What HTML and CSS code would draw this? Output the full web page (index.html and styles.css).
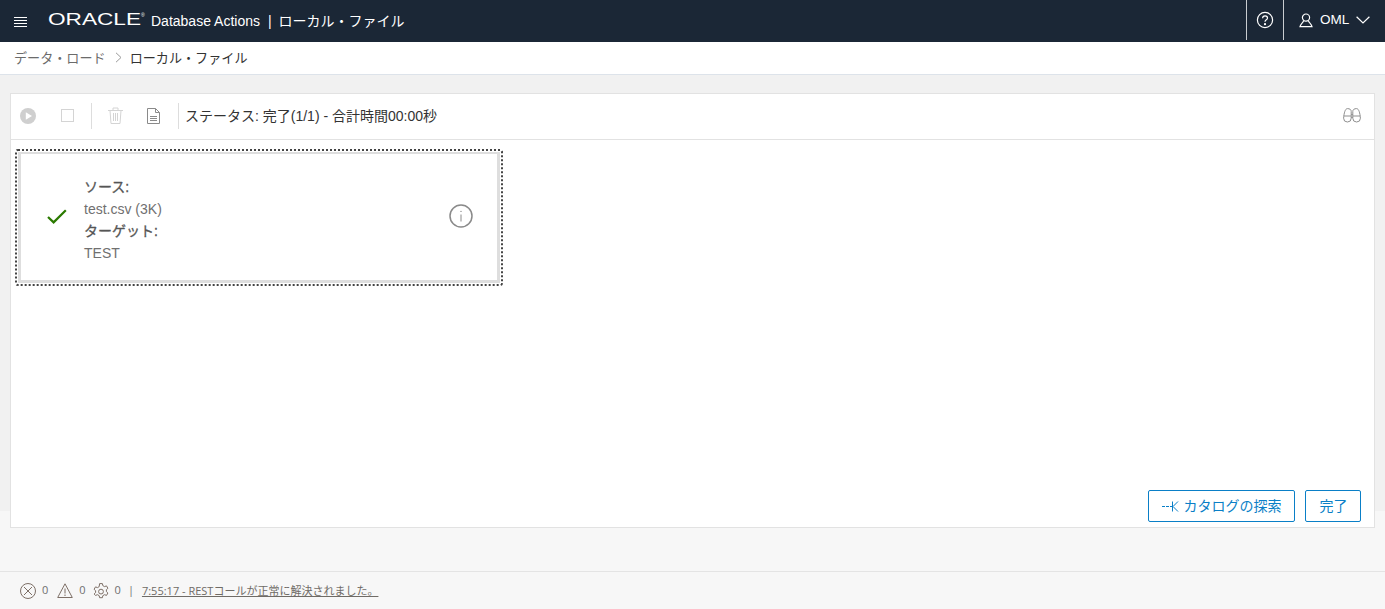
FILE: index.html
```html
<!DOCTYPE html>
<html lang="ja">
<head>
<meta charset="utf-8">
<title>ローカル・ファイル</title>
<link rel="stylesheet" href="styles.css">
</head>
<body>
<header class="topbar">
  <button class="menu" aria-label="menu">
    <svg width="14" height="12" viewBox="0 0 14 12"><path d="M0 1.5h13M0 4.5h13M0 7.5h13M0 10.5h13" stroke="#fff" stroke-width="1" fill="none"/></svg>
  </button>
  <svg class="logo" width="98" height="20" viewBox="0 0 98 20"><text x="0" y="15" textLength="93" lengthAdjust="spacingAndGlyphs" class="logo-text">ORACLE</text><text x="93" y="7" class="logo-r">®</text></svg>
  <span class="product">Database Actions</span>
  <span class="sep">|</span>
  <span class="page-title">ローカル・ファイル</span>
  <div class="top-right">
    <div class="help">
      <svg width="18" height="18" viewBox="0 0 18 18" fill="none" stroke="#fff" stroke-width="1.2"><circle cx="9" cy="9" r="7.6"/><path d="M6.6 7.2c0-1.5 1.1-2.4 2.5-2.4s2.4.9 2.4 2.1c0 1.9-2.5 1.9-2.5 3.9"/><circle cx="9" cy="13.2" r=".5" fill="#fff"/></svg>
    </div>
    <div class="user">
      <svg width="14" height="15" viewBox="0 0 14 15" fill="none" stroke="#fff" stroke-width="1.2"><circle cx="7" cy="4.6" r="3.6"/><path d="M4.6 7.6C4.4 9.8 1.6 10.6 1 13.6h12c-.6-3-3.4-3.8-3.6-6"/></svg>
      <span class="user-name">OML</span>
      <svg width="14" height="8" viewBox="0 0 14 8" fill="none" stroke="#fff" stroke-width="1.2"><path d="M.6.8 7 7 13.4.8"/></svg>
    </div>
  </div>
</header>

<nav class="crumbs">
  <span class="crumb-link">データ・ロード</span>
  <svg class="crumb-sep" width="7" height="11" viewBox="0 0 7 11" fill="none" stroke="#9a9a9a" stroke-width="1"><path d="M1 .8 6 5.5 1 10.2"/></svg>
  <span class="crumb-current">ローカル・ファイル</span>
</nav>

<main class="content">
  <section class="panel">
    <div class="toolbar">
      <div class="tool tool-play">
        <svg width="16" height="16" viewBox="0 0 16 16"><circle cx="8" cy="8" r="8" fill="#cfcfcf"/><path d="M5.8 4.2v7.6L12 8z" fill="#fff"/></svg>
      </div>
      <div class="tool tool-stop">
        <svg width="13" height="13" viewBox="0 0 13 13" fill="none" stroke="#d4d4d4" stroke-width="1"><rect x=".5" y=".5" width="12" height="12"/></svg>
      </div>
      <span class="divider"></span>
      <div class="tool tool-trash">
        <svg width="15" height="17" viewBox="0 0 15 17" fill="none" stroke="#d4d4d4" stroke-width="1"><path d="M0 3.5h15M5 3.5V1h5v2.5M2 3.5l1 13h9l1-13M5.5 6v8M7.5 6v8M9.5 6v8"/></svg>
      </div>
      <div class="tool tool-doc">
        <svg width="13" height="16" viewBox="0 0 13 16" fill="none" stroke="#8a8a8a" stroke-width="1"><path d="M.5.5h8l4 4v11H.5zM8.5.5v4h4M3 8.5h7M3 10.5h7M3 12.5h7"/></svg>
      </div>
      <span class="divider"></span>
      <span class="status">ステータス: 完了(1/1) - 合計時間00:00秒</span>
      <svg class="binoculars" width="18" height="15" viewBox="0 0 18 15" fill="none" stroke="#8f8f8f" stroke-width="1"><path d="M4.4.6C2.2.6 1 5 .6 10.2a3.8 3.8 0 0 0 7.6 0V3.4C8.2 1.6 6.8.6 4.4.6z"/><path d="M13.6.6c2.2 0 3.4 4.4 3.8 9.6a3.8 3.8 0 0 1-7.6 0V3.4c0-1.8 1.4-2.8 3.8-2.8z"/><path d="M8.2 6.5h1.6M8.2 9.5h1.6M.8 8h7.4M9.8 8h7.4"/></svg>
    </div>
    <div class="panel-body">
      <div class="card-outline">
        <article class="card">
          <svg class="check" width="20" height="15" viewBox="0 0 20 15" fill="none" stroke="#2b7a00" stroke-width="2.2"><path d="M1 8l5.6 5.4L18.8 1.2"/></svg>
          <div class="card-text">
            <div class="label">ソース:</div>
            <div class="value">test.csv (3K)</div>
            <div class="label">ターゲット:</div>
            <div class="value">TEST</div>
          </div>
          <svg class="info" width="24" height="24" viewBox="0 0 24 24" fill="none" stroke="#8a8a8a"><circle cx="12" cy="12" r="11" stroke-width="1.5"/><path d="M12 10.5v7" stroke-width="1"/><circle cx="12" cy="7.4" r=".7" fill="#8a8a8a" stroke="none"/></svg>
        </article>
      </div>
      <div class="actions">
        <button class="btn btn-explore">
          <svg class="explore-icon" width="17" height="11" viewBox="0 0 17 11" fill="none" stroke="#0a7fc7" stroke-width="1"><path d="M0 5.5h3M4 5.5h3M8 5.5h3M10.5 .5v10M16 .5 11 5.5l5 5"/></svg>
          カタログの探索
        </button>
        <button class="btn btn-done">完了</button>
      </div>
    </div>
  </section>
</main>

<footer class="statusbar">
  <svg width="16" height="16" viewBox="0 0 16 16" fill="none" stroke="#7d6f66" stroke-width="1"><circle cx="8" cy="8" r="7.5"/><path d="M4 4l8 8M12 4l-8 8"/></svg>
  <span class="count">0</span>
  <svg width="16" height="15" viewBox="0 0 16 15" fill="none" stroke="#7d6f66" stroke-width="1"><path d="M8 .8 15.3 14.5H.7zM8 5.5v5M8 11.5v1.5"/></svg>
  <span class="count">0</span>
  <svg class="gear" width="16" height="16" viewBox="0 0 16 16" fill="none" stroke="#7d6f66" stroke-width="1"><path d="M6.6.6h2.8l.4 2 1.7 1 2-.7 1.4 2.4-1.5 1.4v1.9l1.5 1.4-1.4 2.4-2-.7-1.7 1-.4 2H6.6l-.4-2-1.7-1-2 .7L1.1 11l1.5-1.4V7.7L1.1 6.3l1.4-2.4 2 .7 1.7-1z"/><circle cx="8" cy="8.6" r="2.4"/></svg>
  <span class="count">0</span>
  <span class="bar">|</span>
  <a class="message" href="#">7:55:17 - RESTコールが正常に解決されました。</a>
</footer>
</body>
</html>
```

FILE: styles.css
```css
* { box-sizing: border-box; }
html, body { height: 100%; }
body {
  margin: 0;
  display: flex;
  flex-direction: column;
  height: 100vh;
  overflow: hidden;
  background: #f7f7f7;
  font-family: "Liberation Sans", "Noto Sans CJK JP", sans-serif;
  color: #333;
}
.topbar {
  height: 42px;
  flex: none;
  display: flex;
  align-items: center;
  background: #1b2736;
  color: #fff;
  line-height: 40px;
}
.menu {
  display: flex;
  background: none;
  border: 0;
  padding: 0;
  margin-left: 14px;
  margin-top: 2px;
}
.logo { margin-left: 20px; margin-bottom: 2px; flex: none; }
.logo-text { font: 400 17px "Liberation Sans", sans-serif; fill: #fff; }
.logo-r { font: 400 5px "Liberation Sans", sans-serif; fill: #fff; }
.product { font-size: 14px; margin-left: 5px; margin-bottom: 1px; }
.sep { font-size: 14px; margin-left: 8px; margin-bottom: 1px; }
.page-title { font-size: 14px; margin-left: 7px; margin-bottom: 1px; }
.top-right { margin-left: auto; display: flex; height: 40px; align-self: flex-start; }
.help {
  width: 38px;
  display: flex;
  align-items: center;
  justify-content: center;
  border-left: 1px solid #c9ccd0;
  border-right: 1px solid #c9ccd0;
}
.user {
  width: 101px;
  display: flex;
  align-items: center;
  padding-left: 15px;
  font-size: 13.5px;
}
.user-name { margin-left: 7px; margin-right: 7px; }
.crumbs {
  height: 33px;
  flex: none;
  display: flex;
  align-items: center;
  padding-left: 14px;
  padding-bottom: 2px;
  background: #fff;
  border-bottom: 1px solid #dde3ea;
  font-size: 13.1px;
}
.crumb-link { color: #6b6b6b; }
.crumb-sep { margin: 0 8px 0 9px; }
.crumb-current { color: #333; }
.content {
  flex: 1;
  min-height: 0;
  padding: 18px 10px 43px;
  display: flex;
  background: linear-gradient(#f1f1f1 436px, #f7f7f7 436px);
}
.panel {
  flex: 1;
  display: flex;
  flex-direction: column;
  background: #fff;
  border: 1px solid #e2e2e2;
}
.toolbar {
  height: 46px;
  flex: none;
  display: flex;
  align-items: center;
  border-bottom: 1px solid #e2e2e2;
  padding-left: 9px;
  padding-right: 13px;
  padding-bottom: 2px;
}
.tool { display: flex; align-items: center; }
.tool-play { width: 41px; }
.tool-stop { width: 30px; }
.tool-trash { width: 39px; }
.tool-doc { width: 31px; }
.divider {
  width: 1px;
  height: 26px;
  background: #ddd;
  margin-right: 16px;
}
.status {
  font-size: 14px;
  color: #333;
  margin-left: -10px;
  margin-bottom: 2px;
}
.binoculars { margin-left: auto; }
.panel-body {
  flex: 1;
  display: flex;
  flex-direction: column;
  justify-content: space-between;
  padding: 9px 13px 5px 4px;
}
.card-outline {
  width: 488px;
  height: 137px;
  border: 2px dotted #444;
  padding: 1px;
  border-radius: 3px;
}
.card {
  height: 100%;
  display: flex;
  align-items: center;
  border: 3px solid #dedede;
  border-top-width: 2px;
  padding: 0 24px 1px 26px;
}
.check { flex: none; margin-right: 17px; }
.card-text { flex: 1; padding-top: 6px; }
.info { margin-bottom: 1px; }
.label { font-size: 14px; line-height: 22px; color: #555; -webkit-text-stroke: .3px #555; }
.value { font-size: 14px; line-height: 22px; color: #707070; }
.actions {
  display: flex;
  justify-content: flex-end;
  gap: 10px;
}
.btn {
  height: 32px;
  display: flex;
  align-items: center;
  justify-content: center;
  gap: 5px;
  padding: 0 0 3px;
  background: #fff;
  border: 1px solid #0a7fc7;
  border-radius: 2px;
  color: #0a7fc7;
  font: 14px "Liberation Sans", "Noto Sans CJK JP", sans-serif;
}
.explore-icon { margin-top: 3px; }
.btn-explore { width: 147px; }
.btn-done { width: 56px; padding-left: 1px; }
.statusbar {
  height: 38px;
  flex: none;
  display: flex;
  align-items: center;
  padding-left: 20px;
  background: #f7f7f7;
  border-top: 1px solid #e4e4e4;
  font-family: "Open Sans", "Noto Sans CJK JP", sans-serif;
  font-size: 11px;
  color: #6f6f6f;
}
.count { margin: 0 9px 2px 6px; }
.gear { margin-left: -2px; }
.bar { margin: 0 8px 2px -2px; color: #6f6f6f; }
.message { color: #6f6b66; margin-bottom: 2px; }
```
